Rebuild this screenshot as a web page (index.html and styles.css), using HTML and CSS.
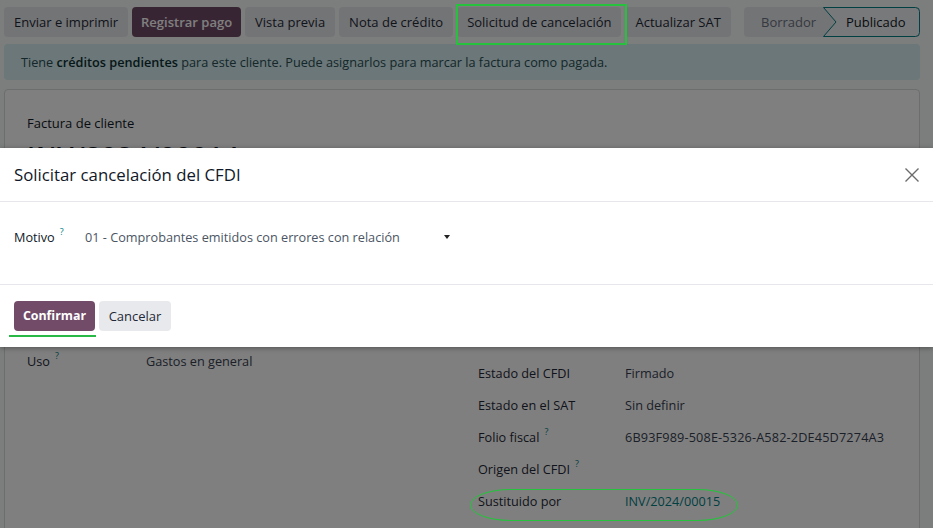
FILE: index.html
```html
<!DOCTYPE html>
<html lang="es">
<head>
<meta charset="utf-8">
<title>Factura de cliente</title>
<link rel="stylesheet" href="styles.css">
</head>
<body>
<div class="page">
  <div class="controlbar">
    <div class="actions">
      <button class="btn btn-top">Enviar e imprimir</button>
      <button class="btn btn-top btn-primary">Registrar pago</button>
      <button class="btn btn-top">Vista previa</button>
      <button class="btn btn-top">Nota de crédito</button>
      <button class="btn btn-top">Solicitud de cancelación</button>
      <button class="btn btn-top">Actualizar SAT</button>
    </div>
    <div class="statusbar">
      <span class="stage stage-draft">Borrador</span>
      <span class="stage stage-active">
        <svg class="stage-shape" viewBox="0 0 97 30" width="97" height="30" aria-hidden="true"><path d="M0.5,0.5 H92.5 Q96.5,0.5 96.5,4.5 V25.5 Q96.5,29.5 92.5,29.5 H0.5 L13,15 Z" fill="#f1f3f4" stroke="#017e84" stroke-width="1"/></svg>
        <span class="stage-label">Publicado</span>
      </span>
    </div>
  </div>

  <div class="alert">Tiene <b>créditos pendientes</b> para este cliente. Puede asignarlos para marcar la factura como pagada.</div>

  <div class="sheet">
    <div class="sheet-title">Factura de cliente</div>
    <h1 class="sheet-name">INV/2024/00014</h1>
    <div class="groups">
      <div class="group group-left">
        <div class="row"><span class="label">Uso<sup class="help">?</sup></span><span class="value">Gastos en general</span></div>
      </div>
      <div class="group group-right">
        <div class="row"><span class="label">Estado del CFDI</span><span class="value">Firmado</span></div>
        <div class="row"><span class="label">Estado en el SAT</span><span class="value">Sin definir</span></div>
        <div class="row"><span class="label">Folio fiscal<sup class="help">?</sup></span><span class="value folio">6B93F989-508E-5326-A582-2DE45D7274A3</span></div>
        <div class="row"><span class="label">Origen del CFDI<sup class="help">?</sup></span><span class="value"></span></div>
        <div class="row"><span class="label">Sustituido por</span><span class="value link">INV/2024/00015</span></div>
      </div>
    </div>
  </div>
</div>

<div class="backdrop"></div>

<div class="modal">
  <div class="modal-header">
    <h4 class="modal-title">Solicitar cancelación del CFDI</h4>
    <button class="modal-close" aria-label="Cerrar"><svg viewBox="0 0 16 16" width="16" height="16" aria-hidden="true"><path d="M1.5 1.5 L14.5 14.5 M14.5 1.5 L1.5 14.5" stroke="#6b6b6b" stroke-width="1.4" fill="none"/></svg></button>
  </div>
  <div class="modal-body">
    <div class="field">
      <span class="field-label">Motivo<sup class="help">?</sup></span>
      <div class="select"><span class="select-text">01 - Comprobantes emitidos con errores con relación</span><span class="caret"></span></div>
    </div>
  </div>
  <div class="modal-footer">
    <button class="btn btn-primary btn-confirm">Confirmar</button>
    <button class="btn btn-cancel">Cancelar</button>
  </div>
</div>

<div class="mark mark-rect"></div>
<div class="mark mark-underline"></div>
<div class="mark mark-oval"></div>
</body>
</html>
```

FILE: styles.css
```css
* { box-sizing: border-box; }

html, body {
  margin: 0;
  padding: 0;
}

body {
  background: #f9fafb;
  font-family: "Open Sans", "Noto Sans", sans-serif;
  font-size: 12.7px;
  color: #374151;
  width: 933px;
  height: 528px;
  overflow: hidden;
  position: relative;
}

.page {
  padding: 7px 13px 0 4px;
}

/* ---------- control bar ---------- */
.controlbar {
  display: flex;
  align-items: center;
  height: 30px;
}

.actions {
  display: flex;
  gap: 4px;
}

.btn {
  font-family: inherit;
  font-size: 12.7px;
  height: 30px;
  padding: 0 9.5px;
  border: 0;
  border-radius: 4px;
  background: #e7e9ed;
  color: #1f2937;
  line-height: 30px;
  white-space: nowrap;
  cursor: pointer;
}

.btn-top {
  font-size: 13px;
  padding: 0 10px;
}

.btn-primary {
  background: #714b67;
  color: #ffffff;
  font-weight: 600;
}

.btn-top.btn-primary {
  padding: 0 9px;
}

.btn-confirm {
  width: 81px;
  padding: 0;
  font-weight: 700;
  font-size: 12.4px;
}

.btn-cancel {
  width: 72px;
  padding: 0;
  font-size: 13px;
}

.statusbar {
  margin-left: auto;
  display: flex;
  height: 30px;
  width: 176px;
  background: #e7e9ed;
  border-radius: 4px;
}

.stage {
  display: flex;
  align-items: center;
  height: 30px;
}

.stage-draft {
  padding-left: 17px;
  width: 79px;
  color: #6b7280;
  font-size: 13px;
}

.stage-active {
  position: relative;
  width: 97px;
  color: #111827;
  font-size: 13px;
}

.stage-shape {
  position: absolute;
  left: 0;
  top: 0;
}

.stage-label {
  position: relative;
  padding-left: 23px;
}

/* ---------- alert ---------- */
.alert {
  margin-top: 7px;
  height: 36px;
  padding: 0 17px;
  line-height: 36px;
  background: #d6eef1;
  border-radius: 4px;
  color: #2b4f55;
}

.alert b {
  font-weight: 600;
  color: #0d2e33;
}

/* ---------- sheet ---------- */
.sheet {
  margin-top: 9px;
  height: 460px;
  background: #ffffff;
  border: 1px solid #d8dadd;
  border-radius: 4px;
  padding: 23px 22px 0 22px;
}

.sheet-title {
  line-height: 20px;
  color: #111827;
  font-size: 13px;
}

.sheet-name {
  margin: 5px 0 0;
  font-size: 26px;
  line-height: 34px;
  font-weight: 600;
  color: #111827;
  letter-spacing: 1px;
}

.groups {
  margin-top: 45px;
  display: grid;
  grid-template-columns: 1fr 1fr;
  column-gap: 32px;
}

.group-left {
  padding-top: 128px;
}

.group-right {
  padding-top: 140px;
}

.row {
  display: flex;
  align-items: center;
  height: 32px;
}

.label {
  width: 119px;
  flex: none;
  color: #1f2937;
}

.group-right .label {
  width: 147px;
}

.value {
  color: #374151;
}

.value.folio {
  letter-spacing: 0.15px;
}

.value.link {
  color: #017e84;
}

.help {
  color: #017e84;
  font-size: 9px;
  margin-left: 5px;
  vertical-align: top;
  position: relative;
  top: -3px;
}

/* ---------- backdrop & modal ---------- */
.backdrop {
  position: absolute;
  inset: 0;
  background: rgba(0, 0, 0, 0.5);
}

.modal {
  position: absolute;
  left: 0;
  right: 0;
  top: 148px;
  background: #ffffff;
  box-shadow: 0 1px 5px rgba(0, 0, 0, 0.35);
}

.modal-header {
  display: flex;
  align-items: center;
  justify-content: space-between;
  padding: 16px 13px 16px 14px;
  border-bottom: 1px solid #e5e7eb;
}

.modal-title {
  margin: 0;
  font-size: 16.8px;
  line-height: 21px;
  font-weight: 400;
  color: #111827;
}

.modal-close {
  border: 0;
  background: transparent;
  padding: 0;
  width: 16px;
  height: 16px;
  display: flex;
}

.modal-body {
  padding: 16px 14px 28px;
  border-bottom: 1px solid #e5e7eb;
}

.field {
  display: flex;
  align-items: center;
  height: 38px;
}

.field-label {
  width: 71px;
  flex: none;
  color: #111827;
  font-weight: 500;
}

.select {
  width: 370px;
  display: flex;
  align-items: center;
  color: #4b5563;
}

.caret {
  margin-left: auto;
  margin-right: 5px;
  width: 0;
  height: 0;
  border-left: 3.5px solid transparent;
  border-right: 3.5px solid transparent;
  border-top: 4px solid #222;
}

.modal-footer {
  display: flex;
  gap: 4px;
  padding: 16px 14px;
}

/* ---------- annotation marks ---------- */
.mark {
  position: absolute;
  pointer-events: none;
}

.mark-rect {
  left: 456px;
  top: 4px;
  width: 171px;
  height: 41px;
  border: 2px solid #27c23d;
}

.mark-underline {
  left: 9px;
  top: 335px;
  width: 87px;
  height: 2px;
  background: #27b845;
}

.mark-oval {
  left: 470px;
  top: 489px;
  width: 268px;
  height: 32px;
  border: 1.5px solid #27c23d;
  border-radius: 40px / 16px;
}
```
